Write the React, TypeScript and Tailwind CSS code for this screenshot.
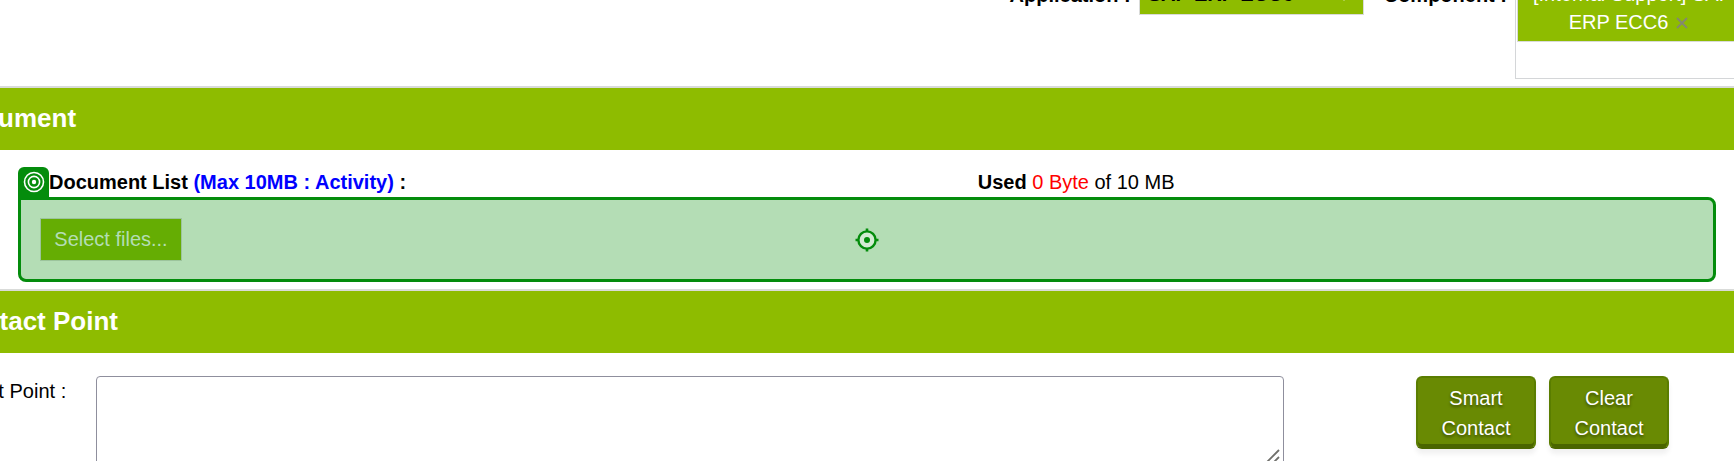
import React from 'react';

function SectionHeader({ title }: { title: string }) {
  return (
    <h2 className="h-16 border-t-2 border-[#d9dbd9] bg-[#8ebc00] text-[26px] leading-[61px] font-bold whitespace-nowrap text-white">
      <span className="-ml-[51px]">{title}</span>
    </h2>
  );
}

function TargetIcon() {
  return (
    <svg width="22" height="22" viewBox="0 0 22 22" fill="none" stroke="white" aria-hidden="true">
      <circle cx="11" cy="11" r="9.5" strokeWidth="1.6" />
      <circle cx="11" cy="11" r="5.6" strokeWidth="1.6" />
      <circle cx="11" cy="11" r="2.2" fill="white" stroke="none" />
    </svg>
  );
}

function CrosshairIcon() {
  return (
    <svg width="24" height="24" viewBox="0 0 24 24" fill="none" stroke="#048c0c" strokeWidth="2.4" aria-hidden="true">
      <circle cx="12" cy="12" r="8.6" fill="#d3ebd3" />
      <path d="M12 .5V4M12 20v3.5M.5 12H4M20 12h3.5" strokeWidth="2.6" />
      <circle cx="12" cy="12" r="3" fill="#048c0c" stroke="none" />
    </svg>
  );
}

function ActionButton({ first, second }: { first: string; second: string }) {
  return (
    <button
      type="button"
      className="h-[73px] w-[120px] shrink-0 rounded-md border-2 border-[#5a7d00] border-b-[#4a6500] bg-[#698a03] leading-[30px] text-white shadow-[inset_0_-3px_0_#4a6500,0_5px_5px_rgba(0,0,0,0.06)] [text-shadow:0_2px_3px_rgba(0,0,0,0.45)]"
    >
      {first}
      <br />
      {second}
    </button>
  );
}

export default function App() {
  return (
    <div className="flex h-screen flex-col overflow-hidden bg-white font-['Liberation_Sans',Arial,sans-serif] text-[20px] leading-[30px] text-black">
      <div className="-mt-[26px] flex h-28 shrink-0 items-start justify-end whitespace-nowrap">
        <label htmlFor="application" className="mt-1.5 mr-2 font-bold">
          Application :
        </label>
        <div className="relative mr-5 w-[225px]">
          <select
            id="application"
            className="block h-[41px] w-full appearance-none border border-[#d9dbd9] bg-[#8ebc00] px-2 pb-0.5 font-bold text-black"
          >
            <option>SAP ERP ECC6</option>
          </select>
          <svg className="pointer-events-none absolute top-4 right-[14px]" width="12" height="12" viewBox="0 0 12 12" fill="#e4efc4" aria-hidden="true">
            <path d="M0 2h12L6 11z" />
          </svg>
        </div>
        <span className="mt-1.5 mr-2 font-bold">Component :</span>
        <div className="-mr-4 h-[105px] w-[235px] shrink-0 border border-[#d4d6d8] px-px">
          <div className="h-[67px] border border-[#d9dbd9] bg-[#8ebc00] pt-1 text-center leading-7 text-white">
            [Internal Support] SAP
            <br />
            ERP ECC6
            <button type="button" aria-label="Remove ERP ECC6" className="mr-2 ml-2 inline-block">
              <svg width="12" height="12" viewBox="0 0 12 12" stroke="#84886f" strokeWidth="1.8" aria-hidden="true">
                <path d="M1 1l10 10M11 1L1 11" />
              </svg>
            </button>
          </div>
        </div>
      </div>

      <section className="shrink-0">
        <SectionHeader title="Document" />
        <div className="h-[139px] px-[18px] pt-[17px]">
          <div className="grid grid-cols-[13fr_10fr]">
            <div className="flex whitespace-nowrap">
              <span className="flex h-[30px] w-[31px] items-center justify-center rounded-t-md bg-[#048c0c]">
                <TargetIcon />
              </span>
              <label htmlFor="files" className="font-bold">
                Document List <span className="text-[#0000ff]">(Max 10MB : Activity)</span> :
              </label>
            </div>
            <p>
              <b>Used</b> <span className="text-[#ff0000]">0 Byte</span> of 10 MB
            </p>
          </div>
          <div className="relative flex h-[85px] items-center rounded-lg rounded-tl-none border-[3px] border-[#048c0c] bg-[#b4ddb5] px-[19px]">
            <button
              id="files"
              type="button"
              className="h-[43px] w-[142px] border border-[#9cc49c] bg-[#65ad03] pb-0.5 text-[#b4ddb5]"
            >
              Select files...
            </button>
            <span className="pointer-events-none absolute inset-0 flex items-center justify-center">
              <CrosshairIcon />
            </span>
          </div>
        </div>
      </section>

      <section className="shrink-0">
        <SectionHeader title="Contact Point" />
        <div className="flex items-start pt-[23px] pr-[65px]">
          <label htmlFor="contact" className="-ml-[65px] w-[161px] shrink-0 whitespace-nowrap">
            Contact Point :
          </label>
          <div className="relative mr-[132px] flex-1">
            <textarea
              id="contact"
              className="block h-[92px] w-full resize-none rounded-[4px] border border-[#8f8f9d] bg-white"
            />
            <svg className="absolute right-[4px] bottom-[4px]" width="15" height="15" viewBox="0 0 15 15" stroke="#70706c" strokeWidth="1.8" aria-hidden="true">
              <path d="M0 15L14 1M7 15l7-7" />
            </svg>
          </div>
          <div className="flex gap-[13px]">
            <ActionButton first="Smart" second="Contact" />
            <ActionButton first="Clear" second="Contact" />
          </div>
        </div>
      </section>
    </div>
  );
}
